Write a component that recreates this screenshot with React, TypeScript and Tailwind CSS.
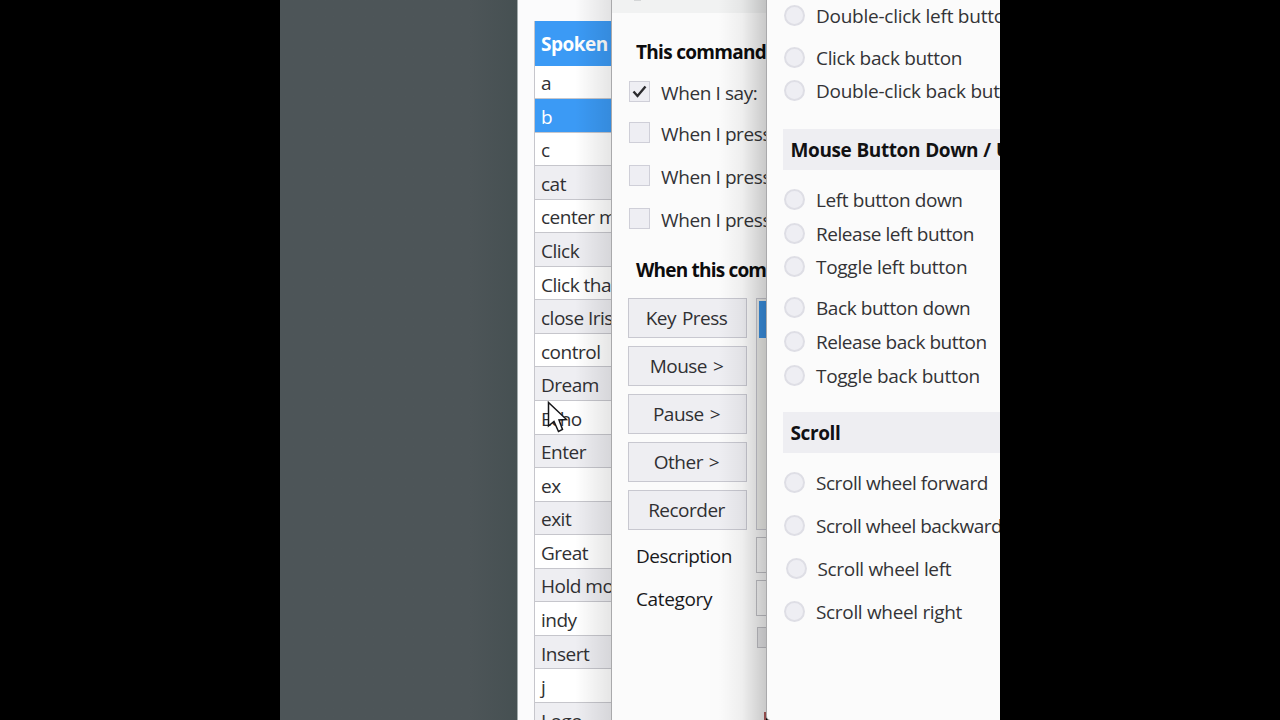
import React from 'react'
import clsx from 'clsx'

const words = [
    'a', 'b', 'c', 'cat', 'center mouse', 'Click', 'Click that', 'close Iris', 'control', 'Dream', 'Echo',
    'Enter', 'ex', 'exit', 'Great', 'Hold mouse', 'indy', 'Insert', 'j', 'Logo',
]

const triggers = [
    { label: 'When I say:', checked: true, gap: 'mt-[15px]' },
    { label: 'When I press', checked: false, gap: 'mt-[20px]' },
    { label: 'When I press', checked: false, gap: 'mt-[22px]' },
    { label: 'When I press', checked: false, gap: 'mt-[22px]' },
]

const actions = ['Key Press', 'Mouse >', 'Pause >', 'Other >', 'Recorder']

const Radio = ({ label, className }: { label: string, className?: string }) => {
    return (
        <div className={clsx('flex h-[21px] shrink-0 items-center pl-[17px]', className)}>
            <span className="size-[21px] shrink-0 rounded-full border-2 border-[#dedee5] bg-[#eeeef3]" />
            <span className="ml-[11px] whitespace-nowrap text-[#333336]">{label}</span>
        </div>
    )
}

const Heading = ({ label, className }: { label: string, className?: string }) => {
    return (
        <h2 className={clsx('ml-4 flex h-[41px] shrink-0 items-center bg-[#eeeef2] pt-px pl-[7.5px] font-bold whitespace-nowrap text-[#111113] tracking-[-0.4px] [word-spacing:0.6px]', className)}>
            {label}
        </h2>
    )
}

const WordList = () => {
    return (
        <div className="relative flex w-[94px] shrink-0 flex-col overflow-hidden border-l border-[#a3abac] bg-[#fbfbfc] pt-[21px]">
            <div className="ml-4 flex flex-col border-l border-[#c6c6cc]">
                <div className="flex h-[44.5px] shrink-0 items-center bg-[#3b9af5] pt-px pl-[6px] font-bold text-white tracking-[-0.5px]">Spoken</div>
                {words.map((word, i) => (
                    <div
                        key={word}
                        className={clsx(
                            'flex h-[33.55px] shrink-0 items-center border-b border-[#c6c6cc] pt-[3px] pl-[6px] whitespace-nowrap',
                            word === 'b' ? 'bg-[#3b9af5] text-white' : 'text-[#303033]',
                            word !== 'b' && (i > 2 && i % 2 === 1 ? 'bg-[#eeeef2]' : 'bg-white'),
                        )}
                    >
                        {word}
                    </div>
                ))}
            </div>
            <div className="absolute inset-y-0 right-0 w-9 bg-linear-to-r from-transparent to-black/10" />
        </div>
    )
}

const CommandWindow = () => {
    return (
        <div className="relative flex w-[155px] shrink-0 flex-col overflow-hidden border-l border-[#a9a9ab] bg-[#fbfbfb]">
            <div className="h-[13px] shrink-0 bg-[#f1f2f2] pl-[22px]">
                <div className="h-px w-[7px] bg-[#d4d6d7]" />
            </div>
            <h2 className="mt-[25px] ml-6 h-7 shrink-0 leading-7 font-bold whitespace-nowrap text-[#0c0c0d] tracking-[-0.7px]">This command</h2>
            {triggers.map((t, i) => (
                <div key={i} className={clsx('ml-[17px] flex h-[21px] shrink-0 items-center', t.gap)}>
                    <span className="flex size-[21px] shrink-0 items-center justify-center border border-[#cfcfd8] bg-[#eeeef3]">
                        {t.checked && (
                            <svg width="15" height="13" viewBox="0 0 15 13" fill="none">
                                <path d="M1.5 6.5 L5.5 11 L13.5 1.5" stroke="#2b2b2e" strokeWidth="2.4" />
                            </svg>
                        )}
                    </span>
                    <span className="ml-[11px] pt-[2px] whitespace-nowrap text-[#333336] tracking-[-0.4px]">{t.label}</span>
                </div>
            ))}
            <h2 className="mt-[27px] ml-6 h-7 shrink-0 leading-7 font-bold whitespace-nowrap text-[#0c0c0d] tracking-[-0.8px]">When this command</h2>
            <div className="mt-[14px] ml-4 flex shrink-0 gap-[9px]">
                <div className="flex shrink-0 flex-col gap-2">
                    {actions.map((action) => (
                        <button key={action} className="h-10 w-[119px] border border-[#c8c8d0] bg-[#eeeef2] pr-[2px] text-[#303033] [word-spacing:1.5px]">{action}</button>
                    ))}
                </div>
                <div className="h-[232px] w-20 shrink-0 border border-[#c8c8d0] bg-[#f1f1ee] pt-[2px] pl-[2px]">
                    <div className="h-[37px] bg-[#3b92e4]" />
                </div>
            </div>
            <div className="mt-[7px] flex h-9 shrink-0 items-center pl-6 text-[#19191b]">
                <span className="w-[120px] shrink-0 pt-px">Description</span>
                <span className="h-9 w-20 shrink-0 border border-[#c3c3c8] bg-[#fafafa]" />
            </div>
            <div className="mt-[7px] flex h-9 shrink-0 items-center pl-6 text-[#19191b]">
                <span className="w-[120px] shrink-0 pt-px tracking-[-0.35px]">Category</span>
                <span className="h-9 w-20 shrink-0 border border-[#c3c3c8] bg-[#fafafa]" />
            </div>
            <span className="mt-[11px] ml-[145px] size-[21px] shrink-0 border border-[#c3c3c8] bg-[#eaeaec]" />
            <div className="absolute inset-y-0 right-0 w-12 bg-linear-to-r from-transparent via-black/5 to-black/20" />
            <div className="absolute right-0 bottom-0 h-2 w-[2px] bg-[#8e4a4a]" />
        </div>
    )
}

const MouseWindow = () => {
    return (
        <div className="flex flex-1 flex-col overflow-hidden rounded-bl-[4px] border-l border-[#a9a9ab] bg-[#fbfbfb] pt-[5px] tracking-[-0.33px]">
            <Radio label="Double-click left button" className="tracking-[-0.25px]" />
            <Radio label="Click back button" className="mt-[21px]" />
            <Radio label="Double-click back button" className="mt-[12px] tracking-[-0.25px]" />
            <Heading label="Mouse Button Down / Up" className="mt-[28px]" />
            <Radio label="Left button down" className="mt-[19px] tracking-[-0.4px]" />
            <Radio label="Release left button" className="mt-[13px] tracking-[-0.45px]" />
            <Radio label="Toggle left button" className="mt-[12px] tracking-[-0.28px]" />
            <Radio label="Back button down" className="mt-[20px] tracking-[-0.43px]" />
            <Radio label="Release back button" className="mt-[13px] tracking-[-0.45px]" />
            <Radio label="Toggle back button" className="mt-[13px] tracking-[-0.28px]" />
            <Heading label="Scroll" className="mt-[26px]" />
            <Radio label="Scroll wheel forward" className="mt-[19px] tracking-[-0.45px]" />
            <Radio label="Scroll wheel backward" className="mt-[22px] tracking-[-0.5px]" />
            <Radio label="Scroll wheel left" className="mt-[22px] ml-[1.5px]" />
            <Radio label="Scroll wheel right" className="mt-[22px]" />
        </div>
    )
}

const App = () => {
    return (
        <div className="flex h-[720px] w-[1280px] overflow-hidden bg-black px-[280px] font-['Open_Sans',sans-serif] text-[19px] leading-6 tracking-[-0.5px]">
            <div className="w-[237px] shrink-0 bg-linear-to-r from-[#4d5558] from-80% to-[#465052]" />
            <div className="relative flex flex-1 overflow-hidden">
                <WordList />
                <CommandWindow />
                <MouseWindow />
                {/* mouse pointer */}
                <svg className="absolute top-[401px] left-[30px]" width="21" height="32" viewBox="0 0 21 32">
                    <path d="M1.5 1.5 V25 L7 20.500 L11.5 30.500 L15.5 28.500 L12 19 L19.5 18.500 Z" fill="#fff" stroke="#151518" strokeWidth="1.5" />
                </svg>
            </div>
        </div>
    )
}

export default App
